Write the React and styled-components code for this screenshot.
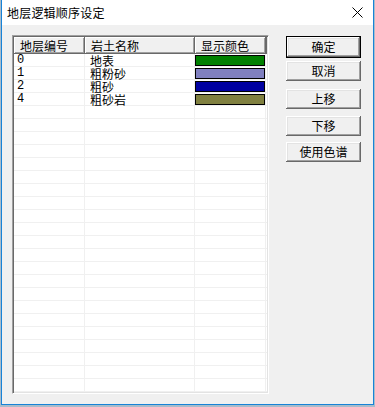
import React from 'react';
import styled, { createGlobalStyle } from 'styled-components';

const GlobalStyle = createGlobalStyle`
  html, body {
    margin: 0;
    padding: 0;
    background: #a9bccb;
  }
  body {
    font-family: "Noto Sans CJK SC", "Liberation Sans", sans-serif;
    font-size: 12px;
    color: #000;
  }
`;

const Frame = styled('div')`
  width: 375px;
  height: 407px;
  box-sizing: border-box;
  padding: 0 1px 2px 1px;
  background: #a9bccb;
`;

const Window = styled('div')`
  height: 405px;
  box-sizing: border-box;
  border: 1px solid #1883d7;
  border-top: none;
  background: #f0f0f0;
  display: flex;
  flex-direction: column;
`;

const TitleBar = styled('div')`
  height: 25px;
  flex: none;
  background: #ffffff;
  display: flex;
  align-items: center;
  justify-content: space-between;
  padding: 0 10px 0 5px;
`;

const Title = styled('span')`
  font-size: 12px;
  line-height: 14px;
  letter-spacing: 0.2px;
`;

const Client = styled('div')`
  display: flex;
  align-items: flex-start;
  padding: 10px 0 0 10px;
`;

const ListView = styled('div')`
  width: 257px;
  height: 359px;
  box-sizing: border-box;
  background: #ffffff;
  border-top: 1px solid #a0a0a0;
  border-left: 1px solid #a0a0a0;
  border-right: 1px solid #ffffff;
  border-bottom: 1px solid #ffffff;
  box-shadow: inset 1px 1px #696969, inset -1px -1px #e3e3e3;
  padding: 1px;
  overflow: hidden;
`;

const Grid = styled('div')`
  display: grid;
  grid-template-columns: 71px 110px 71px 1fr;
`;

const HeaderCell = styled('div')`
  height: 17px;
  box-sizing: border-box;
  background: #f0f0f0;
  box-shadow: inset -1px -1px #696969, inset 1px 1px #ffffff, inset -2px -2px #a0a0a0;
  padding-left: ${p => p.pad ?? 6}px;
  line-height: 17px;
  white-space: nowrap;
`;

const Cell = styled('div')`
  height: 13px;
  box-sizing: border-box;
  border-right: ${p => (p.last ? 'none' : '1px solid #f0f0f0')};
  border-bottom: 1px solid #f0f0f0;
  padding-left: ${p => p.pad || 0}px;
  line-height: 13px;
  white-space: nowrap;
  font-family: ${p => (p.mono ? '"Liberation Mono", "Noto Sans CJK SC", monospace' : 'inherit')};
`;

const Swatch = styled('div')`
  height: 11px;
  box-sizing: border-box;
  margin-top: 1px;
  border: 1px solid #000000;
  background: ${p => p.color};
`;

const Buttons = styled('div')`
  display: flex;
  flex-direction: column;
  margin-left: 17px;
  padding-top: 1px;
`;

const Button = styled('button')`
  width: 75px;
  height: ${p => (p.primary ? 22 : 20)}px;
  margin-top: ${p => p.gap || 0}px;
  box-sizing: border-box;
  padding: 0;
  background: #f0f0f0;
  border: ${p => (p.primary ? '1px solid #000000' : 'none')};
  box-shadow: inset -1px -1px #696969, inset 1px 1px #ffffff, inset -2px -2px #a0a0a0, inset 2px 2px #e3e3e3;
  font-family: "Noto Sans CJK SC", sans-serif;
  font-size: 12px;
  line-height: 14px;
  color: #000;
`;

const CloseIcon = () => (
  <svg width="11" height="11" viewBox="0 0 11 11">
    <path d="M0.5 0.5 L10.5 10.5 M10.5 0.5 L0.5 10.5" stroke="#000" strokeWidth="1" fill="none" />
  </svg>
);

const layers = [
  { id: '0', name: '地表', color: '#008000' },
  { id: '1', name: '粗粉砂', color: '#8080c0' },
  { id: '2', name: '粗砂', color: '#0000a0' },
  { id: '4', name: '粗砂岩', color: '#808040' },
];

const rows = Array.from({ length: 26 }, (_, i) => layers[i] || null);

export default function App() {
  return (
    <>
      <GlobalStyle />
      <Frame>
        <Window>
          <TitleBar>
            <Title>地层逻辑顺序设定</Title>
            <CloseIcon />
          </TitleBar>
          <Client>
            <ListView>
              <Grid>
                <HeaderCell>地层编号</HeaderCell>
                <HeaderCell>岩土名称</HeaderCell>
                <HeaderCell>显示颜色</HeaderCell>
                <HeaderCell pad={0} />
                {rows.map((r, i) => (
                  <React.Fragment key={i}>
                    <Cell mono pad={3}>{r ? r.id : ''}</Cell>
                    <Cell pad={5}>{r ? r.name : ''}</Cell>
                    <Cell>{r && <Swatch color={r.color} />}</Cell>
                    <Cell last />
                  </React.Fragment>
                ))}
              </Grid>
            </ListView>
            <Buttons>
              <Button primary>确定</Button>
              <Button gap={3}>取消</Button>
              <Button gap={8}>上移</Button>
              <Button gap={7}>下移</Button>
              <Button gap={6}>使用色谱</Button>
            </Buttons>
          </Client>
        </Window>
      </Frame>
    </>
  );
}
